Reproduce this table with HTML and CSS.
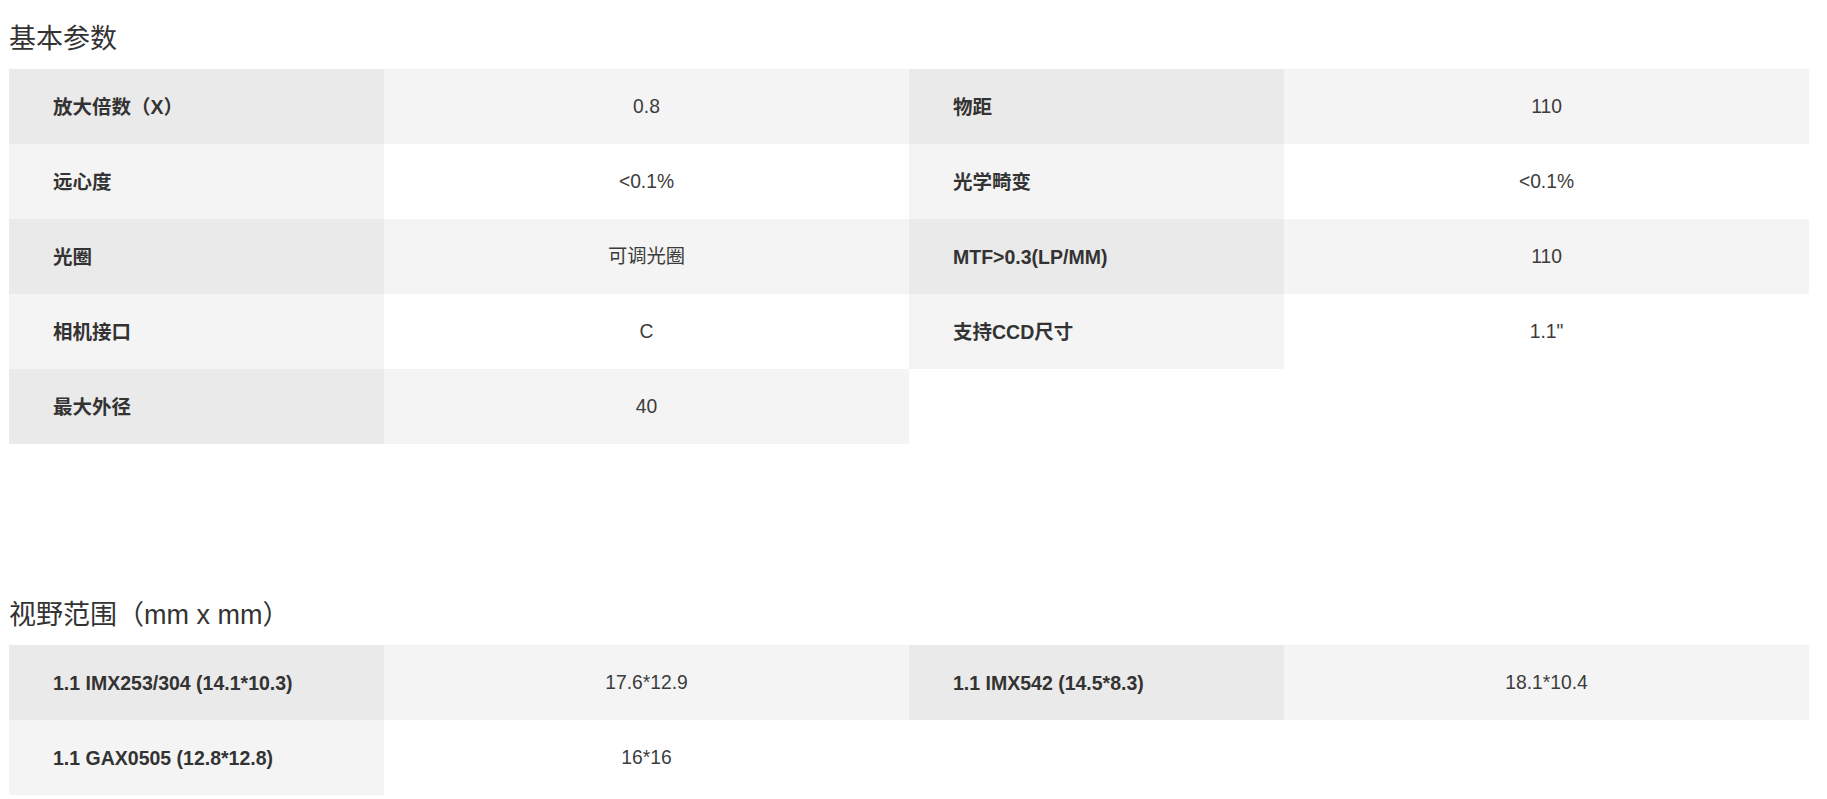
FILE: index.html
```html
<!DOCTYPE html>
<html lang="zh-CN">
<head>
<meta charset="utf-8">
<title>基本参数</title>
<link rel="stylesheet" href="styles.css">
</head>
<body>
<main class="page">
  <section class="spec">
    <h2 class="spec-title">基本参数</h2>
    <div class="spec-grid">
      <div class="cell label">放大倍数（X）</div>
      <div class="cell value">0.8</div>
      <div class="cell label">物距</div>
      <div class="cell value">110</div>

      <div class="cell label">远心度</div>
      <div class="cell value">&lt;0.1%</div>
      <div class="cell label">光学畸变</div>
      <div class="cell value">&lt;0.1%</div>

      <div class="cell label">光圈</div>
      <div class="cell value">可调光圈</div>
      <div class="cell label">MTF&gt;0.3(LP/MM)</div>
      <div class="cell value">110</div>

      <div class="cell label">相机接口</div>
      <div class="cell value">C</div>
      <div class="cell label">支持CCD尺寸</div>
      <div class="cell value">1.1"</div>

      <div class="cell label">最大外径</div>
      <div class="cell value">40</div>
    </div>
  </section>

  <section class="spec spec-second">
    <h2 class="spec-title">视野范围（mm x mm）</h2>
    <div class="spec-grid">
      <div class="cell label">1.1 IMX253/304 (14.1*10.3)</div>
      <div class="cell value">17.6*12.9</div>
      <div class="cell label">1.1 IMX542 (14.5*8.3)</div>
      <div class="cell value">18.1*10.4</div>

      <div class="cell label">1.1 GAX0505 (12.8*12.8)</div>
      <div class="cell value">16*16</div>
    </div>
  </section>
</main>
</body>
</html>
```

FILE: styles.css
```css
html, body {
  margin: 0;
  padding: 0;
  background: #ffffff;
}

body {
  font-family: "Liberation Sans", "Noto Sans CJK SC", sans-serif;
  color: #333333;
}

.page {
  padding: 19px 18px 0 9px;
}

.spec-title {
  margin: 0 0 10px 0;
  font-size: 27px;
  line-height: 40px;
  font-weight: normal;
  color: #333333;
}

.spec-second {
  margin-top: 151px;
}

.spec-grid {
  display: grid;
  grid-template-columns: 375px 525px 375px 525px;
  grid-auto-rows: 75px;
  width: 1800px;
}

.cell {
  display: flex;
  align-items: center;
  line-height: 24px;
}

.label {
  padding-left: 44px;
  font-size: 19.5px;
  font-weight: bold;
  color: #333333;
}

.value {
  justify-content: center;
  font-size: 19.3px;
  color: #3c3c3c;
}

/* odd rows */
.cell:nth-child(8n+1),
.cell:nth-child(8n+3) {
  background: #eaeaea;
}
.cell:nth-child(8n+2),
.cell:nth-child(8n+4) {
  background: #f4f4f4;
}

/* even rows */
.cell:nth-child(8n+5),
.cell:nth-child(8n+7) {
  background: #f4f4f4;
}
.cell:nth-child(8n+6),
.cell:nth-child(8n+8) {
  background: #ffffff;
}
```
